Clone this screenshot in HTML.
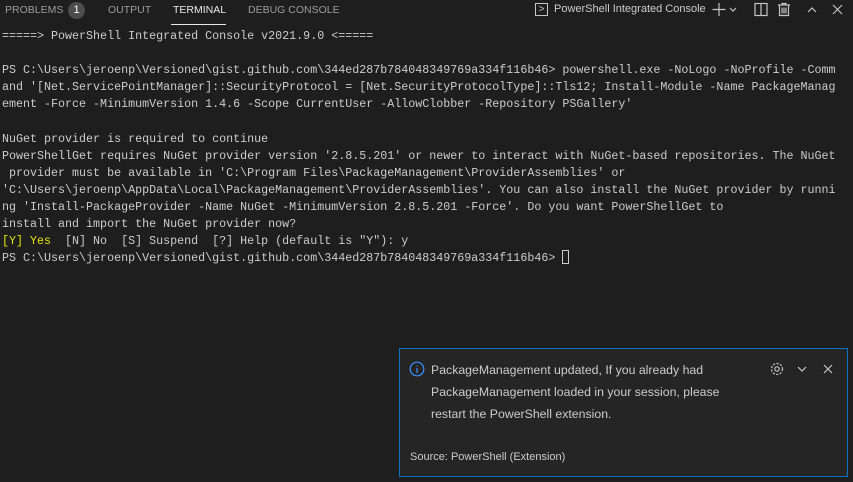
<!DOCTYPE html>
<html><head><style>
body{margin:0;width:853px;height:482px;background:#1e1e1e;overflow:hidden;font-family:"Liberation Sans",sans-serif;position:relative}
.tabs{position:absolute;top:0;left:0;height:22px;width:400px;font-size:10.5px;color:#9d9d9d;white-space:nowrap}
.tab{position:absolute;top:4px}
.badge{position:absolute;top:2px;left:68px;width:17px;height:17px;border-radius:9px;background:#4d4d4d;color:#fff;font-size:11px;text-align:center;line-height:17px}
.term{position:absolute;left:2px;top:28px;font-family:"Liberation Mono",monospace;font-size:11.68px;line-height:17.1px;color:#cccccc;white-space:pre}
.y{color:#e5e510}
.note{position:absolute;left:399px;top:348px;width:449px;height:129px;background:#252526;border:1px solid #0e70c0;box-sizing:border-box;color:#cccccc;font-size:12.3px}
</style></head><body>
<div class="tabs">
<span class="tab" style="left:5px">PROBLEMS</span><span class="badge">1</span>
<span class="tab" style="left:108px">OUTPUT</span>
<span class="tab" style="left:173px;color:#e7e7e7">TERMINAL</span>
<div style="position:absolute;left:171px;top:24px;width:55px;height:1px;background:#e7e7e7"></div>
<span class="tab" style="left:248px">DEBUG CONSOLE</span>
</div>
<div style="position:absolute;left:535px;top:3px;width:11px;height:11px;border:1px solid #c5c5c5;color:#c5c5c5;font-size:10px;line-height:11px;text-align:center">&gt;</div>
<span style="position:absolute;left:554px;top:3px;font-size:11px;color:#cccccc;white-space:nowrap">PowerShell Integrated Console</span>
<svg style="position:absolute;left:710px;top:0" width="143" height="20" fill="none" stroke="#c5c5c5" stroke-width="1.2">
<path d="M9 3v13M2.5 9.5h13"/><path d="M20 8l3 3 3-3"/>
<rect x="45" y="3.5" width="12" height="12"/><path d="M51 3.5v12"/>
<path d="M68 5h12M72 5V3.5h4V5M69.5 5v10.5h9V5M72 7.5v6M74 7.5v6M76 7.5v6"/>
<path d="M98 12l4-4 4 4"/><path d="M123 5l9 9M132 5l-9 9"/>
</svg>
<div class="term">=====&gt; PowerShell Integrated Console v2021.9.0 &lt;=====

PS C:\Users\jeroenp\Versioned\gist.github.com\344ed287b784048349769a334f116b46&gt; powershell.exe -NoLogo -NoProfile -Comm
and '[Net.ServicePointManager]::SecurityProtocol = [Net.SecurityProtocolType]::Tls12; Install-Module -Name PackageManag
ement -Force -MinimumVersion 1.4.6 -Scope CurrentUser -AllowClobber -Repository PSGallery'

NuGet provider is required to continue
PowerShellGet requires NuGet provider version '2.8.5.201' or newer to interact with NuGet-based repositories. The NuGet
 provider must be available in 'C:\Program Files\PackageManagement\ProviderAssemblies' or
'C:\Users\jeroenp\AppData\Local\PackageManagement\ProviderAssemblies'. You can also install the NuGet provider by runni
ng 'Install-PackageProvider -Name NuGet -MinimumVersion 2.8.5.201 -Force'. Do you want PowerShellGet to
install and import the NuGet provider now?
<span class="y">[Y] Yes</span>  [N] No  [S] Suspend  [?] Help (default is "Y"): y
PS C:\Users\jeroenp\Versioned\gist.github.com\344ed287b784048349769a334f116b46&gt; <span style="display:inline-block;width:7px;height:14px;border:1px solid #cccccc;vertical-align:-3px;box-sizing:border-box"></span></div>
<div class="note">
<svg style="position:absolute;left:9px;top:12px" width="16" height="16" fill="none" stroke="#3794ff" stroke-width="1.2"><circle cx="8" cy="8" r="6.8"/><path d="M8 7v5M8 4.5v1"/></svg>
<div style="position:absolute;left:31px;top:10px;line-height:22px;width:305px">PackageManagement updated, If you already had PackageManagement loaded in your session, please restart the PowerShell extension.</div>
<svg style="position:absolute;left:369px;top:12px" width="70" height="16" fill="none" stroke="#c5c5c5" stroke-width="1.2"><circle cx="8" cy="8" r="2.2"/><circle cx="8" cy="8" r="5.5" stroke-dasharray="2.2 1.4"/><path d="M29 6l4 4 4-4"/><path d="M55 4l8 8M63 4l-8 8"/></svg>
<div style="position:absolute;left:10px;top:102px;font-size:11px">Source: PowerShell (Extension)</div>
</div>
</body></html>
